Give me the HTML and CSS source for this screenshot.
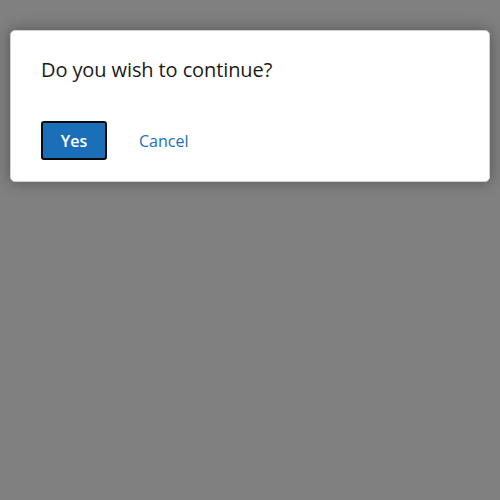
FILE: index.html
```html
<!DOCTYPE html>
<html>
<head>
<meta charset="utf-8">
<link rel="stylesheet" href="styles.css">
</head>
<body>
<div class="dialog">
  <p class="title">Do you wish to continue?</p>
  <div class="actions">
    <button class="btn-primary">Yes</button>
    <button class="btn-link">Cancel</button>
  </div>
</div>
</body>
</html>
```
FILE: styles.css
```css
html, body {
  margin: 0;
  height: 100%;
}
body {
  background: #808080;
  padding: 30px 10px;
  box-sizing: border-box;
  font-family: "Open Sans", "Noto Sans", sans-serif;
}
.dialog {
  background: #fff;
  border: 1px solid #d0d0d0;
  border-radius: 5px;
  box-shadow: 0 0 16px rgba(0, 0, 0, 0.35);
  padding: 25px 30px 20px;
  box-sizing: border-box;
  height: 152px;
}
.title {
  margin: 0;
  font-size: 20px;
  line-height: 28px;
  color: #1b1b1b;
  letter-spacing: -0.1px;
}
.actions {
  display: flex;
  align-items: center;
  gap: 20px;
  margin-top: 37px;
}
.btn-primary {
  width: 66px;
  height: 39px;
  background: #1a6fb8;
  color: #fff;
  border: 2px solid #0a0a0a;
  border-radius: 3px;
  font-family: inherit;
  font-size: 16px;
  font-weight: 600;
  padding: 0;
}
.btn-link {
  background: none;
  border: none;
  color: #1a6fb8;
  font-family: inherit;
  font-size: 16px;
  padding: 0 12px;
}
```
